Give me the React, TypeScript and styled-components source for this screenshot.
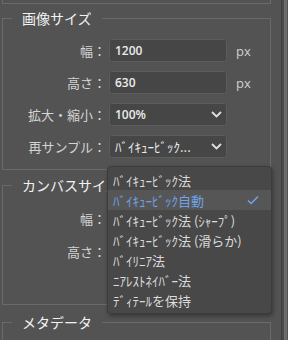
import styled, { createGlobalStyle } from 'styled-components';

const GlobalStyle = createGlobalStyle`
  html, body {
    margin: 0;
    padding: 0;
    background: #535353;
    overflow: hidden;
  }
  body {
    font-family: "Noto Sans CJK JP", "Noto Sans", sans-serif;
    color: #d8d8d8;
  }
`;

const Screen = styled.div`
  display: flex;
  width: 288px;
  height: 340px;
  overflow: hidden;
`;

const Panel = styled.div`
  width: 269px;
  padding-left: 2px;
  position: relative;
`;

const ScrollTrack = styled.div`
  margin-left: 10px;
  width: 7px;
  display: flex;
`;

const TrackEdge = styled.div`
  width: 1px;
  background: #3e3e3e;
`;

const TrackGap = styled.div`
  width: 2px;
  background: #4b4b4b;
`;

const Thumb = styled.div`
  width: 3px;
  background: #6b6b6b;
`;

const PrevBoxEnd = styled.div`
  height: 3px;
  border: 1px solid #6a6a6a;
  border-top: none;
`;

const Group = styled.fieldset<{ $top: number; $bottom: number }>`
  margin: ${p => p.$top}px 0 0 0;
  padding: 0 0 ${p => p.$bottom}px 0;
  border: 1px solid #6a6a6a;
  min-width: 0;
`;

const Legend = styled.legend`
  margin-left: 9px;
  padding: 0 10px;
  font-size: 14px;
  line-height: 16px;
  color: #f2f2f2;
`;

const Rows = styled.div<{ $pad: number; $gap: number }>`
  display: flex;
  flex-direction: column;
  gap: ${p => p.$gap}px;
  padding-top: ${p => p.$pad}px;
`;

const Row = styled.div`
  display: grid;
  grid-template-columns: 103px 118px auto;
  column-gap: 3px;
  align-items: center;
  height: 23px;
  position: relative;
`;

const Label = styled.span`
  text-align: right;
  font-size: 13px;
  line-height: 16px;
  color: #d4d4d4;
  white-space: nowrap;
`;

const Field = styled.div`
  box-sizing: border-box;
  height: 23px;
  display: flex;
  align-items: center;
  justify-content: space-between;
  padding: 0 4px 0 5px;
  background: #464646;
  border: 1px solid #5c5c5c;
  border-radius: 3px;
  font-family: "Open Sans", "Noto Sans CJK JP", sans-serif;
  font-size: 12px;
  font-weight: 600;
  color: #ececec;
`;

const SelectText = styled.span`
  font-family: "Noto Sans CJK JP", sans-serif;
  font-size: 13px;
  font-weight: 400;
  white-space: nowrap;
`;

const Unit = styled.span`
  margin-left: 6px;
  font-family: "Open Sans", sans-serif;
  font-size: 13px;
  color: #d0d0d0;
`;

const Menu = styled.div`
  position: absolute;
  left: 104px;
  top: 31px;
  z-index: 5;
  width: 165px;
  box-sizing: border-box;
  padding: 3px 0;
  background: #484848;
  border: 1px solid #3c3c3c;
  border-radius: 4px;
  box-shadow: 1px 2px 4px rgba(0, 0, 0, 0.35);
`;

const MenuItem = styled.div<{ $active?: boolean }>`
  display: flex;
  align-items: center;
  justify-content: space-between;
  height: 20px;
  padding: 0 12px 0 5px;
  font-size: 13px;
  color: ${p => (p.$active ? '#6fa3e6' : '#dcdcdc')};
  background: ${p => (p.$active ? '#565656' : 'transparent')};
  white-space: nowrap;
`;

const Chevron = () => (
  <svg width="11" height="7" viewBox="0 0 11 7">
    <path d="M1 1l4.5 4.5L10 1" fill="none" stroke="#e0e0e0" strokeWidth="1.8" />
  </svg>
);

const Check = () => (
  <svg width="12" height="10" viewBox="0 0 12 10">
    <path d="M1 5.5l3.2 3L11 1.5" fill="none" stroke="#6fa3e6" strokeWidth="1.6" />
  </svg>
);

const resampleOptions = [
  'ﾊﾞｲｷｭｰﾋﾞｯｸ法',
  'ﾊﾞｲｷｭｰﾋﾞｯｸ自動',
  'ﾊﾞｲｷｭｰﾋﾞｯｸ法 (ｼｬｰﾌﾟ)',
  'ﾊﾞｲｷｭｰﾋﾞｯｸ法 (滑らか)',
  'ﾊﾞｲﾘﾆｱ法',
  'ﾆｱﾚｽﾄﾈｲﾊﾞｰ法',
  'ﾃﾞｨﾃｰﾙを保持',
];

export default function App() {
  const selected = 'ﾊﾞｲｷｭｰﾋﾞｯｸ自動';

  return (
    <Screen>
      <GlobalStyle />
      <Panel>
        <PrevBoxEnd />
        <Group $top={6} $bottom={11}>
          <Legend>画像サイズ</Legend>
          <Rows $pad={13} $gap={9}>
            <Row>
              <Label>幅：</Label>
              <Field>1200</Field>
              <Unit>px</Unit>
            </Row>
            <Row>
              <Label>高さ：</Label>
              <Field>630</Field>
              <Unit>px</Unit>
            </Row>
            <Row>
              <Label>拡大・縮小：</Label>
              <Field>
                100%
                <Chevron />
              </Field>
            </Row>
            <Row>
              <Label>再サンプル：</Label>
              <Field>
                <SelectText>ﾊﾞｲｷｭｰﾋﾞｯｸ...</SelectText>
                <Chevron />
              </Field>
              <Menu>
                {resampleOptions.map(opt => (
                  <MenuItem key={opt} $active={opt === selected}>
                    {opt}
                    {opt === selected && <Check />}
                  </MenuItem>
                ))}
              </Menu>
            </Row>
          </Rows>
        </Group>
        <Group $top={7} $bottom={41}>
          <Legend>カンバスサイズ</Legend>
          <Rows $pad={14} $gap={10}>
            {/* these fields sit under the open menu */}
            <Row>
              <Label>幅：</Label>
              <Field />
            </Row>
            <Row>
              <Label>高さ：</Label>
              <Field />
            </Row>
          </Rows>
        </Group>
        <Group $top={9} $bottom={40}>
          <Legend>メタデータ</Legend>
        </Group>
      </Panel>
      <ScrollTrack>
        <TrackEdge />
        <TrackGap />
        <Thumb />
      </ScrollTrack>
    </Screen>
  );
}
